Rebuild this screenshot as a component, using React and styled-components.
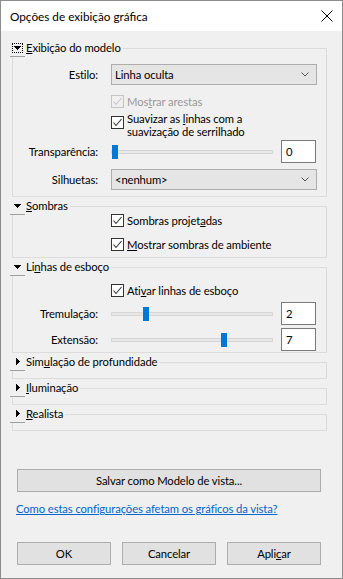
import React from 'react';
import styled, { createGlobalStyle } from 'styled-components';

const Global = createGlobalStyle`
  html, body { margin: 0; padding: 0; background: #f0f0f0; }
  body { font-family: Lato, "Noto Sans", sans-serif; font-size: 11.25px; letter-spacing: -0.1px; color: #000; }
  * { box-sizing: border-box; }
`;

const Window = styled.div`
  width: 343px;
  height: 579px;
  border: 1px solid #8c8c8c;
  background: #f0f0f0;
  display: flex;
  flex-direction: column;
  overflow: hidden;
`;

const TitleBar = styled.div`
  height: 30px;
  flex: none;
  background: #fff;
  display: flex;
  align-items: center;
  justify-content: space-between;
  padding: 0 9px 0 9px;
  font-size: 11.75px;
  letter-spacing: 0;
`;

const Body = styled.div`
  flex: 1;
  display: flex;
  flex-direction: column;
  padding: 9px 15px 13px 9px;
`;

const Section = styled.section`
  display: flex;
  flex-direction: column;
  margin-top: ${(p) => p.$gap}px;
`;

const Header = styled.div`
  display: flex;
  height: 17px;
`;

const Toggle = styled.span`
  flex: none;
  width: 15px;
  height: 17px;
  border-bottom: 1px solid #a0a0a0;
  display: flex;
  align-items: center;
  justify-content: center;
  padding-bottom: 1px;
`;

const Focus = styled.span`
  width: 11px;
  height: 10px;
  display: flex;
  align-items: center;
  justify-content: center;
  border: 1px dotted ${(p) => (p.$on ? '#000' : 'transparent')};
`;

const HeaderText = styled.span`
  flex: none;
  line-height: 16px;
  padding-left: 1px;
  white-space: nowrap;
`;

const Rule = styled.span`
  flex: 1;
  align-self: flex-end;
  height: 9px;
  margin-left: 2px;
  border-top: 1px solid #dcdcdc;
  border-right: 1px solid #dcdcdc;
`;

const Box = styled.div`
  margin-left: 2px;
  border: 1px solid #dcdcdc;
  border-top: none;
  min-height: ${(p) => p.$min || 0}px;
  padding: 0 9px 0 0;
  display: flex;
  flex-direction: column;
`;

const Row = styled.div`
  display: grid;
  grid-template-columns: 85px 206px;
  column-gap: 13px;
  align-items: center;
  height: ${(p) => p.$h}px;
  margin-top: ${(p) => p.$top}px;
`;

const Label = styled.span`
  text-align: right;
  white-space: nowrap;
  line-height: 16px;
`;

const Select = styled.div`
  height: 21px;
  background: #e5e5e5;
  border: 1px solid #adadad;
  display: flex;
  align-items: center;
  justify-content: space-between;
  padding: 0 7px 0 3px;
  line-height: 16px;
`;

const Check = styled.label`
  grid-column: 2;
  display: flex;
  align-items: flex-start;
  gap: 3px;
  color: ${(p) => (p.$disabled ? '#9a9a9a' : '#000')};
  line-height: ${(p) => p.$lh || 15}px;
  white-space: nowrap;
`;

const Box13 = styled.span`
  flex: none;
  width: 13px;
  height: 13px;
  margin-top: ${(p) => p.$mt || 1}px;
  border: 1px solid ${(p) => (p.$disabled ? '#c4c4c4' : '#333')};
  background: ${(p) => (p.$disabled ? '#f0f0f0' : '#fff')};
  display: flex;
  align-items: center;
  justify-content: center;
`;

const Lines = styled.span`
  display: flex;
  flex-direction: column;
`;

const Key = styled.span`
  text-decoration: underline;
`;

const SliderCell = styled.div`
  display: flex;
  align-items: center;
  justify-content: space-between;
  height: 23px;
`;

const Track = styled.div`
  position: relative;
  width: 162px;
  height: 4px;
  background: #e7e7e7;
  border: 1px solid #d6d6d6;
`;

const Thumb = styled.span`
  position: absolute;
  top: -6px;
  width: 6px;
  height: 14px;
  background: #0078d7;
`;

const NumBox = styled.div`
  width: 35px;
  height: 23px;
  margin-right: 1px;
  background: #fff;
  border: 1px solid #7a7a7a;
  padding-left: 4px;
  display: flex;
  align-items: center;
  line-height: 16px;
`;

const Button = styled.button`
  font: inherit;
  letter-spacing: inherit;
  color: #000;
  height: 23px;
  width: ${(p) => (p.$wide ? '304px' : '94px')};
  background: #e1e1e1;
  border: 1px solid #adadad;
  padding: 0;
  line-height: 16px;
`;

const SaveRow = styled.div`
  display: flex;
  margin: 38px 0 0 7px;
`;

const HelpLink = styled.a`
  align-self: flex-start;
  margin: 9px 0 0 6px;
  color: #0066cc;
  text-decoration: underline;
  line-height: 16px;
  cursor: pointer;
`;

const ButtonRow = styled.div`
  display: flex;
  gap: 11px;
  margin: auto 0 0 7px;
`;

const DownTri = () => (
  <svg width="7" height="4" viewBox="0 0 7 4" shapeRendering="crispEdges">
    <path d="M0 0H7V1H6V2H5V3H4V4H3V3H2V2H1V1H0Z" fill="#000" />
  </svg>
);

const RightTri = () => (
  <svg width="4" height="7" viewBox="0 0 4 7" shapeRendering="crispEdges">
    <path d="M0 0V7H1V6H2V5H3V4H4V3H3V2H2V1H1V0Z" fill="#000" />
  </svg>
);

const CheckMark = ({ color }) => (
  <svg width="11" height="11" viewBox="0 0 11 11">
    <path d="M1.5 5.5L4 8.5L9.5 2" fill="none" stroke={color} strokeWidth="1.1" />
  </svg>
);

const Chevron = () => (
  <svg width="8" height="5" viewBox="0 0 8 5">
    <path d="M0.5 0.5L4 4L7.5 0.5" fill="none" stroke="#555" strokeWidth="1" />
  </svg>
);

const CloseIcon = () => (
  <svg width="12" height="12" viewBox="0 0 12 12">
    <path d="M0.5 0.5L11.5 11.5M11.5 0.5L0.5 11.5" stroke="#000" strokeWidth="1" />
  </svg>
);

const SectionHead = ({ open, focus, children }) => (
  <Header>
    <Toggle>
      <Focus $on={focus}>{open ? <DownTri /> : <RightTri />}</Focus>
    </Toggle>
    <HeaderText>{children}</HeaderText>
    <Rule />
  </Header>
);

const CheckBox = ({ disabled, mt, lh, children }) => (
  <Check $disabled={disabled} $lh={lh}>
    <Box13 $disabled={disabled} $mt={mt}>
      <CheckMark color={disabled ? '#c4c4c4' : '#333'} />
    </Box13>
    {children}
  </Check>
);

const Slider = ({ value }) => (
  <Track>
    <Thumb style={{ left: `${value * 15.5}px` }} />
  </Track>
);

export default function App() {
  return (
    <>
      <Global />
      <Window>
        <TitleBar>
          <span>Opções de exibição gráfica</span>
          <CloseIcon />
        </TitleBar>
        <Body>
          <Section $gap={0}>
            <SectionHead open focus>
              <Key>E</Key>xibição do modelo
            </SectionHead>
            <Box>
              <Row $top={7} $h={21}>
                <Label>Estilo:</Label>
                <Select>
                  <span>Linha oculta</span>
                  <Chevron />
                </Select>
              </Row>
              <Row $top={9} $h={15}>
                <CheckBox disabled>
                  <span>
                    Mos<Key>t</Key>rar arestas
                  </span>
                </CheckBox>
              </Row>
              <Row $top={3} $h={26}>
                <CheckBox mt={4} lh={13}>
                  <Lines>
                    <span>
                      Suavizar as <Key>l</Key>inhas com a
                    </span>
                    <span>suavização de serrilhado</span>
                  </Lines>
                </CheckBox>
              </Row>
              <Row $top={2} $h={23}>
                <Label>Transparência:</Label>
                <SliderCell>
                  <Slider value={0} />
                  <NumBox>0</NumBox>
                </SliderCell>
              </Row>
              <Row $top={6} $h={21}>
                <Label>Silhuetas:</Label>
                <Select>
                  <span>&lt;nenhum&gt;</span>
                  <Chevron />
                </Select>
              </Row>
              <Row $top={6} $h={0} />
            </Box>
          </Section>

          <Section $gap={1}>
            <SectionHead open>
              <Key>S</Key>ombras
            </SectionHead>
            <Box>
              <Row $top={-2} $h={15}>
                <CheckBox>
                  <span>
                    Sombras projet<Key>a</Key>das
                  </span>
                </CheckBox>
              </Row>
              <Row $top={9} $h={15}>
                <CheckBox>
                  <span>
                    <Key>M</Key>ostrar sombras de ambiente
                  </span>
                </CheckBox>
              </Row>
              <Row $top={5} $h={0} />
            </Box>
          </Section>

          <Section $gap={1}>
            <SectionHead open>
              Li<Key>n</Key>has de esboço
            </SectionHead>
            <Box>
              <Row $top={7} $h={15}>
                <CheckBox>
                  <span>
                    Ati<Key>v</Key>ar linhas de esboço
                  </span>
                </CheckBox>
              </Row>
              <Row $top={4} $h={23}>
                <Label>Tremulação:</Label>
                <SliderCell>
                  <Slider value={2} />
                  <NumBox>2</NumBox>
                </SliderCell>
              </Row>
              <Row $top={3} $h={23}>
                <Label>Extensão:</Label>
                <SliderCell>
                  <Slider value={7} />
                  <NumBox>7</NumBox>
                </SliderCell>
              </Row>
              <Row $top={1} $h={0} />
            </Box>
          </Section>

          <Section $gap={1}>
            <SectionHead>
              Sim<Key>u</Key>lação de profundidade
            </SectionHead>
            <Box $min={8} />
          </Section>

          <Section $gap={1}>
            <SectionHead>
              <Key>I</Key>luminação
            </SectionHead>
            <Box $min={8} />
          </Section>

          <Section $gap={1}>
            <SectionHead>
              <Key>R</Key>ealista
            </SectionHead>
            <Box $min={8} />
          </Section>

          <SaveRow>
            <Button $wide>Salvar como Modelo de vista...</Button>
          </SaveRow>
          <HelpLink>Como estas configurações afetam os gráficos da vista?</HelpLink>

          <ButtonRow>
            <Button>OK</Button>
            <Button>Cancelar</Button>
            <Button>
              Apli<Key>c</Key>ar
            </Button>
          </ButtonRow>
        </Body>
      </Window>
    </>
  );
}
